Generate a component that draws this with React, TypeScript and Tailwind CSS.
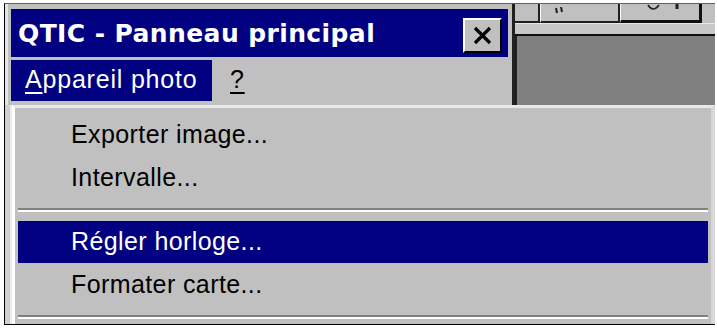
export default function App() {
  const items = "pl-[56px] flex items-center text-[25px] tracking-[0.4px] font-['Liberation_Sans',Arial,sans-serif]";
  return (
    <div className="w-[717px] h-[329px] bg-white overflow-hidden">
      <div className="ml-[4px] mt-[3px] w-[711px] h-[322px] border-l border-t border-b border-l-black border-t-[#606060] border-b-black flex flex-col">
        {/* top row: window header + window behind */}
        <div className="flex h-[101px]">
          <div className="w-[507px] bg-[#c0c0c0] border-l-[3px] border-l-[#e4e4e4] pl-[3px] pt-[5px]">
            <div className="w-[497px] h-[48px] bg-[#000080] flex items-center justify-between pl-[7px] pr-[6px]">
              <span className="text-white font-bold text-[25px] tracking-[0.4px] font-['DejaVu_Sans',sans-serif] leading-none">
                QTIC - Panneau principal
              </span>
              <div className="mt-[5px] w-[39px] h-[35px] bg-[#c0c0c0] border-t-2 border-l-2 border-t-white border-l-white border-b-2 border-r-2 border-b-black border-r-black flex items-center justify-center">
                <svg width="19" height="19" viewBox="0 0 19 19">
                  <path d="M2 2 L17 17 M17 2 L2 17" stroke="black" strokeWidth="3.2" />
                </svg>
              </div>
            </div>
            <div className="h-[45px] flex items-center pt-[1px] font-['Liberation_Sans',Arial,sans-serif] text-[25px] tracking-[0.8px]">
              <div className="w-[201px] h-[41px] bg-[#000080] text-white flex items-center pl-[14px]">
                <span className="underline underline-offset-[4px] decoration-[2px]">A</span>ppareil photo
              </div>
              <span className="ml-[18px] text-black underline underline-offset-[4px] decoration-[2px]">?</span>
            </div>
          </div>
          <div className="w-[3px] bg-[#202020]" />
          <div className="flex-1 flex flex-col bg-[#c0c0c0]">
            <div className="h-[19px] flex">
              <div className="w-[25px] border-r-2 border-b-2 border-[#202020]" />
              <div className="w-[80px] border-r-2 border-b-2 border-[#202020] border-l border-l-white relative">
                <svg className="absolute left-[14px] top-[3px]" width="10" height="8" viewBox="0 0 10 8">
                  <path d="M1 1 L2 6 M6 0 L7 5" stroke="#202020" strokeWidth="2" />
                </svg>
              </div>
              <div className="w-[82px] border-r-[3px] border-b-[3px] border-[#101010] border-l border-l-white relative">
                <svg className="absolute left-[26px] top-0" width="40" height="10" viewBox="0 0 40 10">
                  <path d="M1 1 Q6 9 12 1" stroke="#202020" strokeWidth="1.5" fill="none" />
                  <path d="M30 0 L30 5" stroke="#202020" strokeWidth="3" />
                </svg>
              </div>
              <div className="flex-1" />
            </div>
            <div className="h-[11px] bg-[#c8c8c8] border-t border-t-[#e8e8e8]" />
            <div className="h-[2px] bg-[#101010]" />
            <div className="flex-1 bg-[#808080] border-l-2 border-l-[#202020]" />
          </div>
        </div>
        {/* dropdown menu */}
        <div className="flex flex-1">
          <div className="w-[7px] bg-[#d0d0d0] border-r-2 border-r-[#ececec]" />
          <div className="flex-1 bg-[#c0c0c0] border-l-[3px] border-l-white border-t-[3px] border-t-[#e8e8e8] border-r-[4px] border-r-[#d8d8d8] flex flex-col">
            <div className="h-[5px]" />
            <div className={`h-[43px] text-black ${items}`}>Exporter image...</div>
            <div className={`h-[43px] text-black ${items}`}>Intervalle...</div>
            <div className="h-[22px] flex flex-col justify-center px-[3px]">
              <div className="h-[2px] bg-[#808080]" />
              <div className="h-[2px] bg-white" />
            </div>
            <div className="px-[3px]">
              <div className={`h-[42px] bg-[#000080] text-white !pl-[53px] ${items}`}>Régler horloge...</div>
            </div>
            <div className={`h-[44px] text-black ${items}`}>Formater carte...</div>
            <div className="h-[8px]" />
            <div className="px-[3px]">
              <div className="h-[2px] bg-[#808080]" />
              <div className="h-[2px] bg-white" />
            </div>
          </div>
        </div>
      </div>
    </div>
  );
}
